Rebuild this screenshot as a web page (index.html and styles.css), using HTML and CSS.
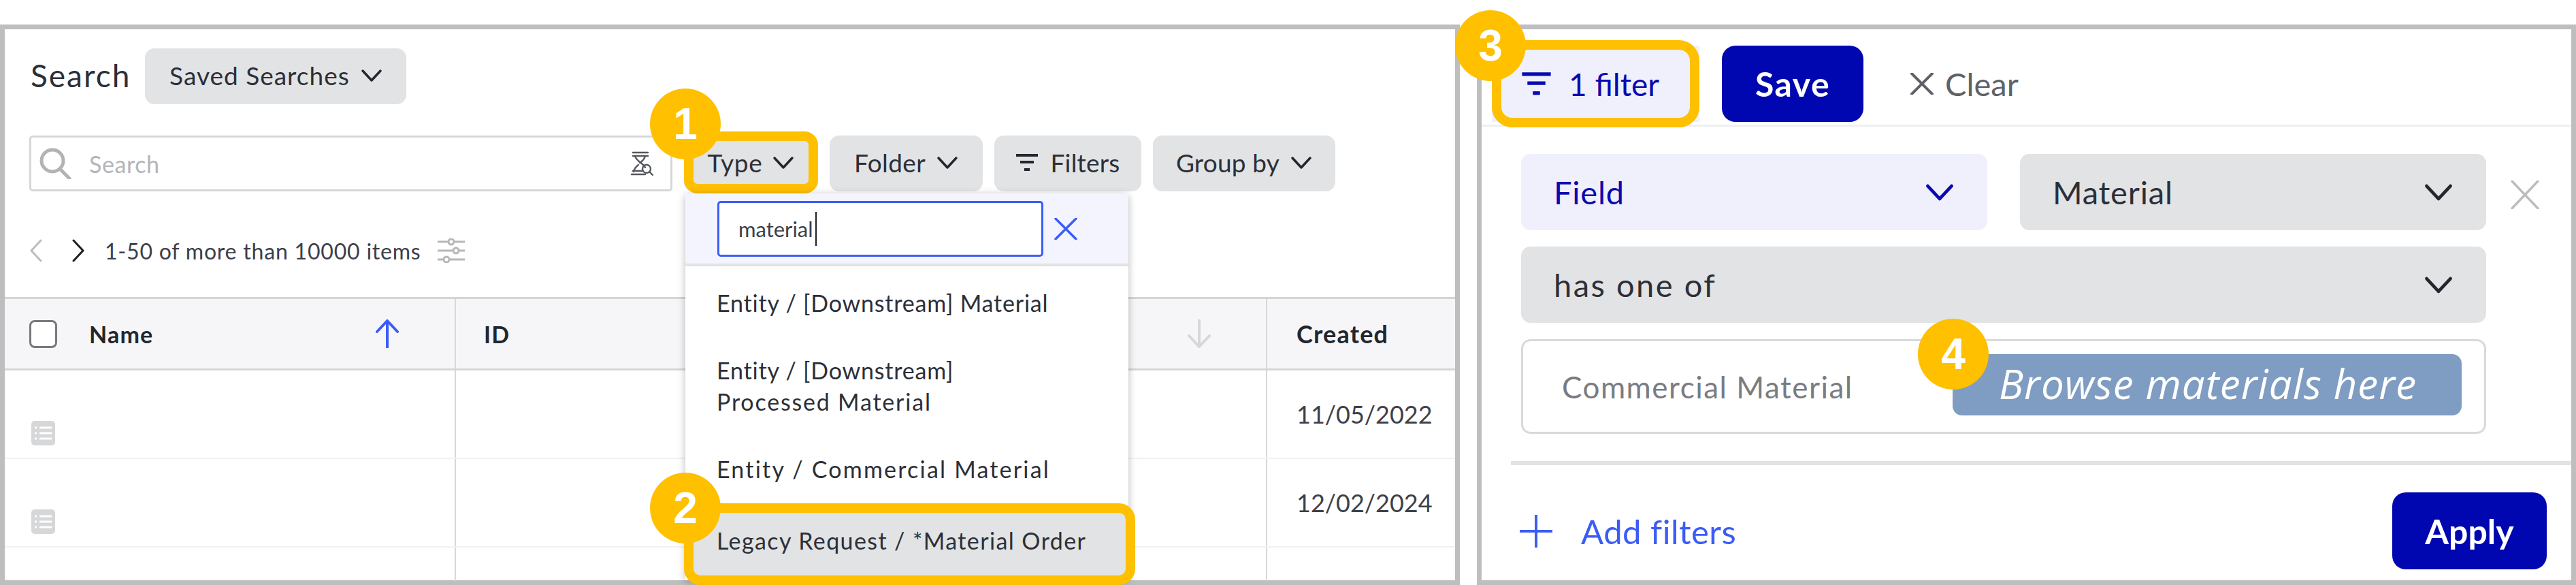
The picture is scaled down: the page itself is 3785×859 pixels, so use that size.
FILE: index.html
```html
<!DOCTYPE html>
<html lang="en">
<head>
    <meta charset="UTF-8">
    <meta name="viewport" content="width=device-width, initial-scale=1.0">
    <title>Search and filters</title>
    <link rel="stylesheet" href="styles.css">
</head>
<body>
    <div class="page">
        <section class="panel panel-search">
            <div class="title-row">
                <h2>Search</h2>
                <button class="btn btn-saved">Saved Searches
                    <svg class="chev" viewBox="0 0 32 20"><path d="M3 3l13 14L29 3"/></svg>
                </button>
            </div>

            <div class="tool-row">
                <div class="search-box">
                    <svg class="mag" viewBox="0 0 48 46"><circle cx="20" cy="19" r="16"/><path d="M31 31l14 14"/></svg>
                    <span class="placeholder">Search</span>
                    <svg class="dna" viewBox="0 0 34 36"><path d="M4 2h22M4 7h22M7 7c2 8 12 10 15 17M22 7c-1 5-5 8-8 10M12 20c-4 3-6 6-7 10M2 34h20M4 29h13"/><circle cx="24" cy="26" r="6"/><path d="M28 30l5 5"/></svg>
                </div>
                <button class="btn btn-type">Type
                    <svg class="chev" viewBox="0 0 32 20"><path d="M3 3l13 14L29 3"/></svg>
                </button>
                <button class="btn btn-folder">Folder
                    <svg class="chev" viewBox="0 0 32 20"><path d="M3 3l13 14L29 3"/></svg>
                </button>
                <button class="btn btn-filters">
                    <svg class="funnel" viewBox="0 0 32 28"><path d="M0 3h32M6 13h20"/><path d="M12 24h8" class="dot"/></svg>
                    Filters
                </button>
                <button class="btn btn-group">Group by
                    <svg class="chev" viewBox="0 0 32 20"><path d="M3 3l13 14L29 3"/></svg>
                </button>
            </div>

            <div class="pager">
                <svg class="page-arrow off" viewBox="0 0 20 34"><path d="M17 2L3 17l14 15"/></svg>
                <svg class="page-arrow" viewBox="0 0 20 34"><path d="M3 2l14 15L3 32"/></svg>
                <span class="page-text">1-50 of more than 10000 items</span>
                <svg class="sliders" viewBox="0 0 40 36"><path d="M0 5h15M25 5h15M0 18h22M32 18h8M0 31h8M18 31h22"/><circle cx="20" cy="5" r="4"/><circle cx="27" cy="18" r="4"/><circle cx="13" cy="31" r="4"/></svg>
            </div>

            <div class="table">
                <div class="t-row t-head">
                    <div class="cell cell-name">
                        <span class="check"></span>
                        <span class="head-label">Name</span>
                        <svg class="sort up" viewBox="0 0 36 42"><path d="M18 41V2M3 18L18 2l15 16"/></svg>
                    </div>
                    <div class="cell cell-id">
                        <span class="head-label">ID</span>
                        <svg class="sort down" viewBox="0 0 36 42"><path d="M18 1v39M3 24l15 16 15-16"/></svg>
                    </div>
                    <div class="cell cell-created"><span class="head-label">Created</span></div>
                </div>
                <div class="t-row t-item">
                    <div class="cell cell-name">
                        <svg class="doc" viewBox="0 0 35 36"><rect width="35" height="36" rx="5"/><path d="M5 10h3M12 10h18M5 18h3M12 18h18M5 26h3M12 26h18"/></svg>
                    </div>
                    <div class="cell"></div>
                    <div class="cell cell-date">11/05/2022</div>
                </div>
                <div class="t-row t-item">
                    <div class="cell cell-name">
                        <svg class="doc" viewBox="0 0 35 36"><rect width="35" height="36" rx="5"/><path d="M5 10h3M12 10h18M5 18h3M12 18h18M5 26h3M12 26h18"/></svg>
                    </div>
                    <div class="cell"></div>
                    <div class="cell cell-date">12/02/2024</div>
                </div>
                <div class="t-row t-last">
                    <div class="cell"></div>
                    <div class="cell"></div>
                    <div class="cell"></div>
                </div>
            </div>

            <div class="type-menu">
                <div class="menu-head">
                    <div class="menu-input">material<span class="caret"></span></div>
                    <svg class="menu-x" viewBox="0 0 34 32"><path d="M2 1l30 30M32 1L2 31"/></svg>
                </div>
                <div class="menu-list">
                    <div class="menu-item">Entity / [Downstream] Material</div>
                    <div class="menu-item">Entity / [Downstream]<br><span class="roomy">Processed Material</span></div>
                    <div class="menu-item"><span class="roomier">Entity / Commercial Material</span></div>
                    <div class="menu-item picked">Legacy Request / *Material Order</div>
                </div>
            </div>

            <span class="step step-1">1</span>
            <span class="step step-2">2</span>
        </section>

        <section class="panel panel-filter">
            <div class="filter-bar">
                <button class="btn-count">
                    <svg class="funnel" viewBox="0 0 32 28"><path d="M0 3h32M6 13h20"/><path d="M12 24h8" class="dot"/></svg>
                    1 filter
                </button>
                <button class="btn-solid btn-save">Save</button>
                <button class="btn-clear">
                    <svg class="clear-x" viewBox="0 0 34 32"><path d="M2 1l30 30M32 1L2 31"/></svg>
                    Clear
                </button>
            </div>

            <div class="filter-form">
                <div class="select select-field">Field
                    <svg class="chev" viewBox="0 0 32 20"><path d="M3 3l13 14L29 3"/></svg>
                </div>
                <div class="select">Material
                    <svg class="chev" viewBox="0 0 32 20"><path d="M3 3l13 14L29 3"/></svg>
                </div>
                <svg class="row-x" viewBox="0 0 42 42"><path d="M2 1l38 40M40 1L2 41"/></svg>
                <div class="select wide op-select">has one of
                    <svg class="chev" viewBox="0 0 32 20"><path d="M3 3l13 14L29 3"/></svg>
                </div>
                <div class="value-box wide">
                    <span class="value-text">Commercial Material</span>
                    <span class="browse-note">Browse materials here</span>
                </div>
            </div>

            <div class="filter-foot">
                <span class="add-filters">
                    <svg class="plus" viewBox="0 0 48 48"><path d="M24 0v48M0 24h48"/></svg>
                    Add filters
                </span>
                <button class="btn-solid btn-apply">Apply</button>
            </div>

            <span class="step step-3">3</span>
            <span class="step step-4">4</span>
        </section>
    </div>
</body>
</html>
```

FILE: styles.css
```css
* {
    box-sizing: border-box;
}
body {
    margin: 0;
    background: white;
    font-family: 'Lato', 'Liberation Sans', sans-serif;
    color: #2c2f38;
}
button {
    font-family: inherit;
    border: none;
    cursor: pointer;
}
svg {
    fill: none;
    stroke-linecap: round;
    stroke-linejoin: round;
    flex: none;
}
.page {
    display: flex;
    gap: 25px;
    height: 859px;
    padding-top: 36px;
}
.panel {
    position: relative;
    border: 7px solid #bebebe;
    height: 823px;
}
.panel-search {
    width: 2145px;
}
.panel-filter {
    width: 1615px;
}

/* left panel */
.title-row {
    display: flex;
    align-items: center;
    gap: 21px;
    padding: 28px 0 0 38px;
}
h2 {
    margin: 0 0 4px;
    font-size: 46px;
    font-weight: 400;
    letter-spacing: 2px;
}
.btn {
    display: flex;
    align-items: center;
    justify-content: center;
    height: 82px;
    padding: 0 0 3px;
    border-radius: 14px;
    background: #e2e3e5;
    color: #2c2f38;
    font-size: 37px;
    letter-spacing: 0.7px;
}
.chev {
    width: 32px;
    height: 20px;
    stroke: #23262e;
    stroke-width: 3.5;
}
.btn-saved {
    width: 384px;
    gap: 16px;
    letter-spacing: 1px;
}
.tool-row {
    display: flex;
    gap: 17px;
    margin: 46px 0 0 36px;
}
.search-box {
    display: flex;
    align-items: center;
    width: 945px;
    height: 82px;
    padding: 0 25px 0 11px;
    border: 3px solid #d6d7d9;
    border-radius: 5px;
}
.mag {
    width: 48px;
    height: 46px;
    stroke: #b2b3b5;
    stroke-width: 5;
}
.placeholder {
    flex: 1;
    margin-left: 26px;
    font-size: 34px;
    letter-spacing: 0.6px;
    color: #b4b5b8;
}
.dna {
    width: 34px;
    height: 36px;
    stroke: #55585e;
    stroke-width: 2.4;
}
.btn-type {
    position: relative;
    width: 197px;
    gap: 15px;
}
.btn-type::after {
    content: "";
    position: absolute;
    inset: -6px 0 -3px 0;
    border: 14px solid #ffc000;
    border-radius: 20px;
}
.btn-folder {
    width: 225px;
    gap: 16px;
    letter-spacing: 0.4px;
}
.btn-filters {
    width: 216px;
    gap: 19px;
    letter-spacing: 0.2px;
}
.btn-group {
    width: 268px;
    gap: 16px;
    letter-spacing: 0.2px;
}
.funnel {
    width: 32px;
    height: 28px;
    stroke: #23262e;
    stroke-width: 4;
    stroke-linecap: butt;
}
.pager {
    display: flex;
    align-items: center;
    height: 36px;
    margin: 69px 0 0 36px;
}
.page-arrow {
    width: 20px;
    height: 34px;
    margin-right: 42px;
    stroke: #1d1f26;
    stroke-width: 3;
}
.page-arrow.off {
    stroke: #bcbcbc;
}
.page-arrow + .page-arrow {
    margin-right: 29px;
}
.page-text {
    font-size: 32px;
    letter-spacing: 0.8px;
    color: #3c4049;
}
.sliders {
    width: 40px;
    height: 36px;
    margin-left: 24px;
    stroke: #b8b8b8;
    stroke-width: 3;
}
.table {
    margin-top: 50px;
    border-top: 3px solid #d4d5d7;
}
.t-row {
    display: grid;
    grid-template-columns: 663px 1192px 1fr;
    border-bottom: 2px solid #f0f1f1;
}
.t-head {
    height: 105px;
    background: #f6f6f8;
    border-bottom: 3px solid #d4d5d7;
}
.t-item {
    height: 130px;
}
.t-last {
    height: 49px;
    border-bottom: none;
}
.cell {
    display: flex;
    align-items: center;
    border-right: 2px solid #d6d7d9;
}
.cell:last-child {
    border-right: none;
}
.cell-name {
    padding-left: 36px;
}
.cell-id {
    padding-left: 41px;
}
.cell-created,
.cell-date {
    padding-left: 43px;
}
.cell-date {
    font-size: 36px;
    color: #3c4049;
}
.check {
    width: 41px;
    height: 41px;
    border: 3px solid #77797e;
    border-radius: 8px;
    background: white;
    margin-right: 47px;
}
.head-label {
    font-size: 34px;
    font-weight: 700;
    color: #23262e;
    letter-spacing: 1.2px;
}
.cell-created .head-label {
    font-size: 36px;
    letter-spacing: 1.2px;
}
.sort {
    width: 36px;
    height: 42px;
    margin-left: auto;
    stroke-width: 4;
}
.sort.up {
    stroke: #3b5cf5;
    margin-right: 81px;
}
.sort.down {
    stroke: #d6d7d9;
    margin-right: 80px;
}
.t-item .cell-name {
    align-items: flex-end;
    padding-left: 39px;
    padding-bottom: 18px;
}
.doc {
    width: 35px;
    height: 36px;
}
.doc rect {
    fill: #d6d7d9;
}
.doc path {
    stroke: white;
    stroke-width: 3;
    stroke-linecap: butt;
}

/* type dropdown */
.type-menu {
    position: absolute;
    left: 1000px;
    top: 241px;
    width: 651px;
    height: 568px;
    background: white;
    box-shadow: 0 2px 12px rgba(0, 0, 0, 0.28);
    border-radius: 6px 6px 0 0;
    z-index: 2;
}
.menu-head {
    display: flex;
    align-items: center;
    gap: 16px;
    height: 107px;
    padding: 0 0 0 47px;
    background: #f3f4fe;
    border-bottom: 4px solid #e2e3e5;
}
.menu-input {
    display: flex;
    align-items: center;
    width: 479px;
    height: 82px;
    padding-left: 28px;
    background: white;
    border: 3px solid #3b5cf5;
    border-radius: 5px;
    font-size: 31px;
    color: #3c4049;
}
.caret {
    width: 2px;
    height: 50px;
    margin-left: 3px;
    background: #1d1f26;
}
.menu-x {
    width: 34px;
    height: 32px;
    stroke: #3b5cf5;
    stroke-width: 3.5;
}
.menu-list {
    display: flex;
    flex-direction: column;
    gap: 3px;
    padding-top: 6px;
}
.menu-item {
    padding: 25px 20px 25px 46px;
    font-size: 34px;
    letter-spacing: 0.8px;
    line-height: 46px;
    color: #2c2f38;
}
.roomy {
    letter-spacing: 1.8px;
}
.roomier {
    letter-spacing: 2.2px;
}
.menu-item.picked {
    position: relative;
    margin-top: 13px;
    padding: 18px 20px 28px 46px;
    letter-spacing: 1.4px;
    background: #e2e3e5;
}
.menu-item.picked::after {
    content: "";
    position: absolute;
    inset: -14px -10px -14px -2px;
    border: 14px solid #ffc000;
    border-radius: 24px;
}

/* right panel */
.filter-bar {
    display: flex;
    align-items: center;
    height: 143px;
    padding: 25px 0 5px 15px;
    border-bottom: 3px solid #efefef;
}
.btn-count {
    position: relative;
    display: flex;
    align-items: center;
    width: 305px;
    height: 112px;
    gap: 26px;
    padding-left: 44px;
    background: #eff0fc;
    color: #0a0ab0;
    font-size: 46px;
}
.btn-count::after {
    content: "";
    position: absolute;
    inset: -8px 0;
    border: 14px solid #ffc000;
    border-radius: 30px;
}
.btn-count .funnel {
    width: 43px;
    height: 37px;
    stroke: #0a0ab0;
}
.btn-solid {
    background: #0007b0;
    color: white;
    font-size: 50px;
    font-weight: 700;
    border-radius: 20px;
}
.btn-save {
    width: 208px;
    height: 112px;
    margin-left: 33px;
    letter-spacing: 1.5px;
}
.btn-clear {
    display: flex;
    align-items: center;
    gap: 17px;
    margin-left: 69px;
    padding: 0;
    background: none;
    font-size: 47px;
    color: #5f6167;
}
.clear-x {
    width: 34px;
    height: 32px;
    stroke: #5f6167;
    stroke-width: 4;
}
.filter-form {
    display: grid;
    grid-template-columns: 685px 685px 1fr;
    grid-template-rows: 112px 112px 139px;
    column-gap: 48px;
    row-gap: 24px;
    margin: 40px 0 0 58px;
}
.select {
    display: flex;
    align-items: center;
    justify-content: space-between;
    padding: 0 48px;
    border-radius: 14px;
    background: #e2e3e5;
    font-size: 47px;
    letter-spacing: 0.8px;
}
.select .chev {
    width: 44px;
    height: 27px;
}
.select-field {
    background: #eff0fc;
    color: #0a0ab0;
}
.select-field .chev {
    stroke: #0a0ab0;
}
.wide {
    grid-column: 1 / span 2;
}
.op-select {
    letter-spacing: 2.5px;
}
.row-x {
    width: 42px;
    height: 42px;
    margin: 39px 0 0 -12px;
    stroke: #bcbcbc;
    stroke-width: 3.5;
}
.value-box {
    display: flex;
    align-items: center;
    justify-content: space-between;
    padding: 0 33px 0 57px;
    border: 3px solid #d8d9da;
    border-radius: 14px;
}
.value-text {
    font-size: 44px;
    letter-spacing: 1.5px;
    color: #7a7c80;
}
.browse-note {
    width: 748px;
    height: 90px;
    margin-bottom: 6px;
    padding-left: 68px;
    background: #7f9dc2;
    border-radius: 14px;
    color: white;
    font-family: 'Open Sans', sans-serif;
    font-style: italic;
    font-size: 60px;
    letter-spacing: 1.1px;
    line-height: 86px;
}
.filter-foot {
    display: flex;
    align-items: flex-start;
    justify-content: space-between;
    margin: 40px 0 0 43px;
    padding: 40px 36px 0 13px;
    border-top: 6px solid #e2e3e5;
}
.add-filters {
    display: flex;
    align-items: center;
    gap: 42px;
    height: 113px;
    font-size: 49px;
    letter-spacing: 0.5px;
    color: #3b5cf5;
}
.plus {
    width: 48px;
    height: 48px;
    stroke: #3b5cf5;
    stroke-width: 4;
}
.btn-apply {
    width: 227px;
    height: 113px;
}

/* numbered callouts */
.step {
    position: absolute;
    z-index: 3;
    display: flex;
    align-items: center;
    justify-content: center;
    width: 104px;
    height: 104px;
    border-radius: 50%;
    background: #ffc000;
    color: white;
    font-family: 'Liberation Sans', sans-serif;
    font-size: 64px;
    font-weight: 700;
}
.step-1 {
    left: 948px;
    top: 87px;
}
.step-2 {
    left: 948px;
    top: 651px;
}
.step-3 {
    left: -39px;
    top: -28px;
}
.step-4 {
    left: 641px;
    top: 425px;
}
```
